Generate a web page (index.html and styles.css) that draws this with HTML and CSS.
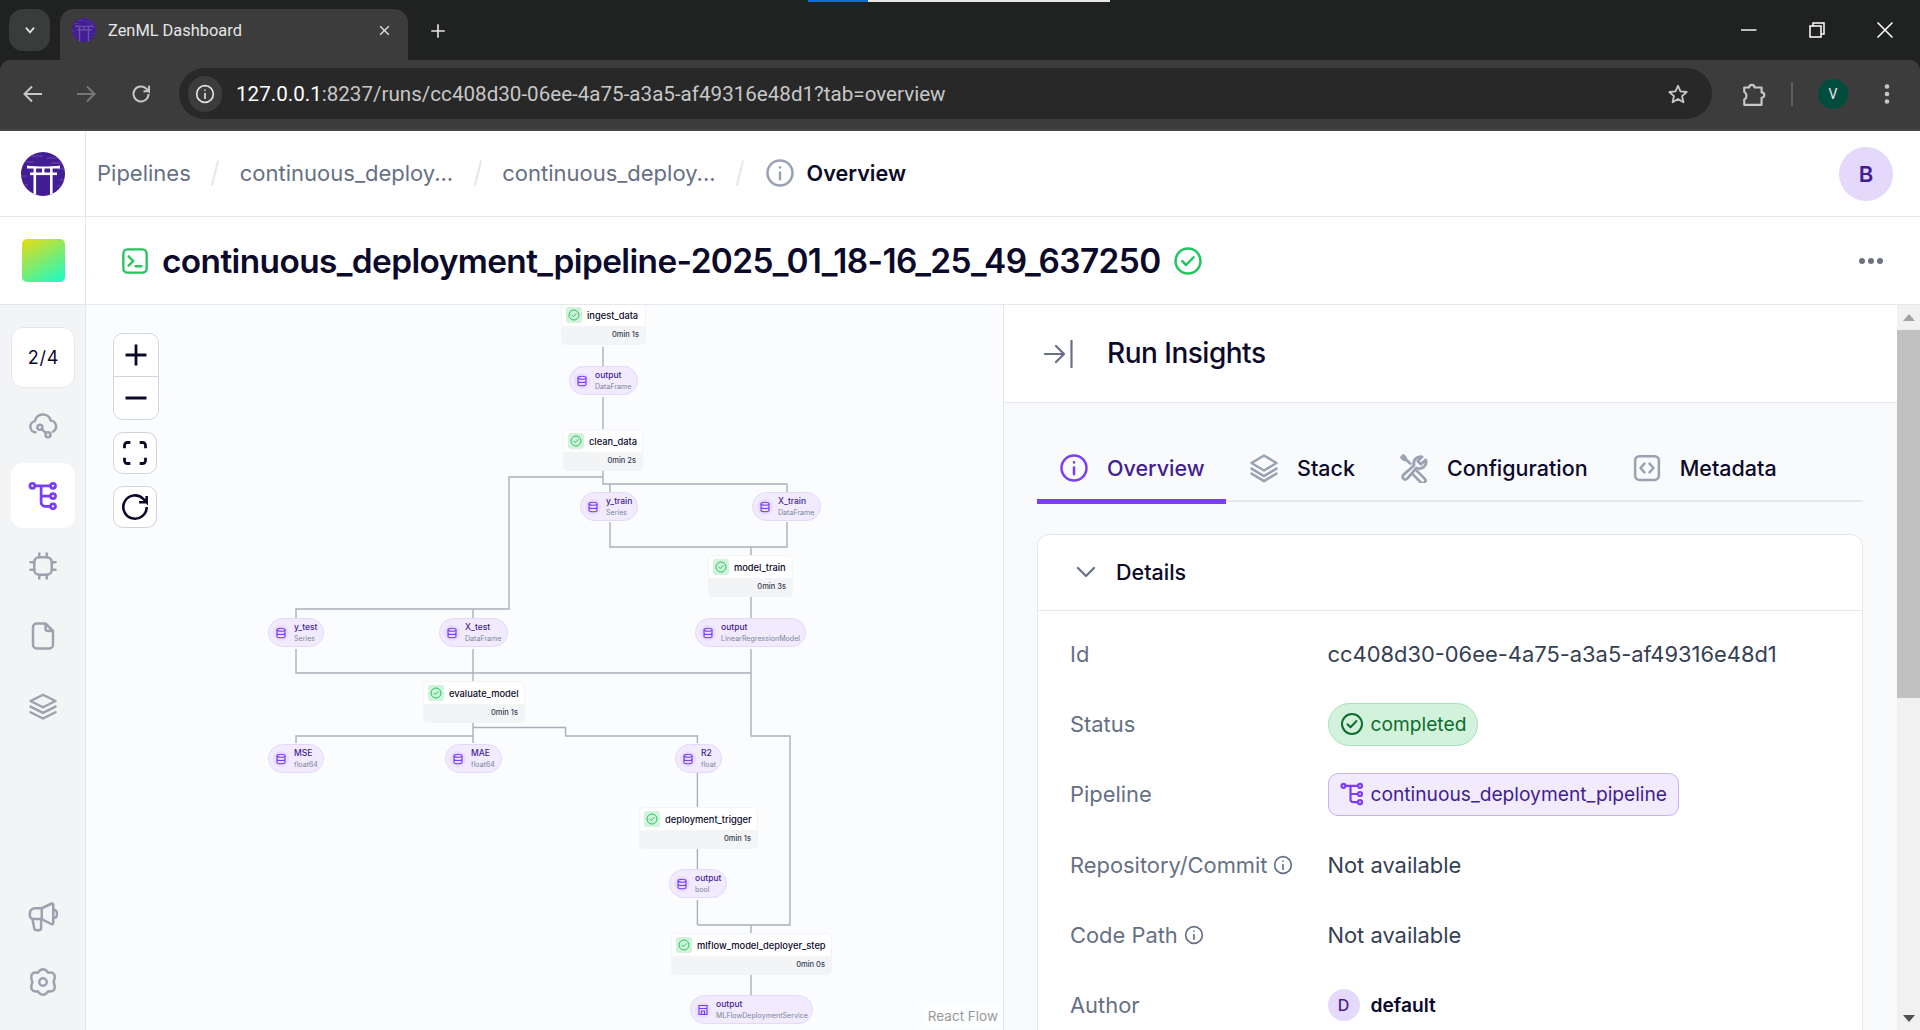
FILE: index.html
```html
<!DOCTYPE html>
<html lang="en">
<head>
<meta charset="utf-8">
<title>ZenML Dashboard</title>
<link rel="stylesheet" href="styles.css">
</head>
<body>
<svg class="defs" width="0" height="0" aria-hidden="true">
  <symbol id="i-check" viewBox="0 0 24 24"><circle cx="12" cy="12" r="10" fill="none" stroke="currentColor" stroke-width="2"/><path d="M7.500 12.200l3 3 6-6.200" fill="none" stroke="currentColor" stroke-width="2" stroke-linecap="round" stroke-linejoin="round"/></symbol>
  <symbol id="i-info" viewBox="0 0 24 24"><circle cx="12" cy="12" r="10" fill="none" stroke="currentColor" stroke-width="2"/><path d="M12 11.500v5.500M12 7.400v.1" fill="none" stroke="currentColor" stroke-width="2" stroke-linecap="round"/></symbol>
  <symbol id="i-db" viewBox="0 0 24 24"><g fill="none" stroke="currentColor" stroke-width="2.400"><ellipse cx="12" cy="5.500" rx="8" ry="3"/><path d="M4 5.500v13c0 1.700 3.600 3 8 3s8-1.300 8-3v-13M4 12c0 1.700 3.600 3 8 3s8-1.300 8-3"/></g></symbol>
  <symbol id="i-flow" viewBox="0 0 24 24"><g fill="none" stroke="currentColor" stroke-width="2.200" stroke-linecap="round"><circle cx="3.500" cy="3.800" r="2"/><circle cx="20" cy="3.800" r="2"/><circle cx="20" cy="12" r="2"/><circle cx="20" cy="20.200" r="2"/><path d="M5.500 3.800H18M10.500 3.800v13.400a3 3 0 0 0 3 3H18M10.500 12H18"/></g></symbol>
  <symbol id="i-logo" viewBox="0 0 44 44"><clipPath id="logoclip"><circle cx="22" cy="22" r="22"/></clipPath><g clip-path="url(#logoclip)"><rect width="44" height="44" fill="#431d93"/><path d="M8 4h14M26 6h12M4 10h9M30 11h12M36 17h8M0 24h5M39 28h5M36 34h8M0 33h7" stroke="#6a4bb0" stroke-width="1"/><path d="M6 13.500c7 1.300 26 1.300 33 0v3H6z" fill="currentColor"/><rect x="9" y="20.500" width="27" height="2.600" fill="currentColor"/><rect x="12.500" y="16" width="2.600" height="28" fill="currentColor"/><rect x="29" y="16" width="2.600" height="28" fill="currentColor"/><rect x="21" y="16" width="2.400" height="5" fill="currentColor"/></g></symbol>
</svg>

<header class="chrome">
  <div class="strip"><span class="loadbar"></span><span class="loadrest"></span></div>
  <div class="tabrow">
    <button class="tabmenu"><svg viewBox="0 0 24 24" class="ic-14"><path d="M5 8l7 8 7-8" fill="none" stroke="#e3e3e3" stroke-width="3"/></svg></button>
    <div class="tab">
      <svg class="favicon"><use href="#i-logo"/></svg>
      <span class="tabtitle">ZenML Dashboard</span>
      <svg viewBox="0 0 24 24" class="tabclose"><path d="M4 4l16 16M20 4L4 20" stroke="#e3e3e3" stroke-width="2.400"/></svg>
    </div>
    <svg viewBox="0 0 24 24" class="newtab"><path d="M12 3v18M3 12h18" stroke="#e3e3e3" stroke-width="2.200"/></svg>
    <div class="winctl">
      <svg viewBox="0 0 16 16" class="win"><path d="M0 8h15.500" stroke="#fff" stroke-width="1.400"/></svg>
      <svg viewBox="0 0 16 16" class="win"><path d="M4 3.500V1h11v11h-3M1 4h11v11H1z" fill="none" stroke="#fff" stroke-width="1.500"/></svg>
      <svg viewBox="0 0 16 16" class="win"><path d="M.5.5l15 15M15.500.5l-15 15" stroke="#fff" stroke-width="1.500"/></svg>
    </div>
  </div>
  <div class="toolbar">
    <svg viewBox="0 0 24 24" class="tool"><path d="M21 12H4M11 4.500L3.500 12l7.500 7.500" fill="none" stroke="#c7c7c7" stroke-width="2"/></svg>
    <svg viewBox="0 0 24 24" class="tool"><path d="M3 12h17M13 4.500l7.500 7.500-7.500 7.500" fill="none" stroke="#777" stroke-width="2"/></svg>
    <svg viewBox="0 0 24 24" class="tool reload"><path d="M19.500 12a7.500 7.500 0 1 1-2.300-5.400L20 9.300V3.800M20 9.300h-5.500" fill="none" stroke="#c7c7c7" stroke-width="2"/></svg>
    <div class="omnibox">
      <span class="sitechip"><svg viewBox="0 0 24 24" class="ic-20"><use href="#i-info" color="#e3e3e3"/></svg></span>
      <span class="url"><b>127.0.0.1</b>:8237/runs/cc408d30-06ee-4a75-a3a5-af49316e48d1?tab=overview</span>
      <svg viewBox="0 0 24 24" class="star"><path d="M12 3l2.700 6.200 6.800.6-5.100 4.500 1.500 6.700-5.900-3.500-5.900 3.500 1.500-6.700-5.100-4.500 6.800-.6z" fill="none" stroke="#c7c7c7" stroke-width="2" stroke-linejoin="round"/></svg>
    </div>
    <svg viewBox="0 0 24 24" class="ext"><path d="M3 6h4.500a2.500 2.500 0 0 1 5 0H19v4.500a2.500 2.500 0 0 1 0 5V22H3v-5a4 4 0 0 0 0-7z" fill="none" stroke="#c7c7c7" stroke-width="2" stroke-linejoin="round"/></svg>
    <span class="tooldiv"></span>
    <span class="profile">V</span>
    <svg viewBox="0 0 24 24" class="kebab"><circle cx="12" cy="4.500" r="2.300" fill="#c7c7c7"/><circle cx="12" cy="12" r="2.300" fill="#c7c7c7"/><circle cx="12" cy="19.500" r="2.300" fill="#c7c7c7"/></svg>
  </div>
</header>

<div class="app">
  <div class="topbar">
    <div class="leadcell"><svg class="logo"><use href="#i-logo"/></svg></div>
    <nav class="crumbs">
      <span>Pipelines</span><i class="slash"></i>
      <span>continuous_deploy...</span><i class="slash"></i>
      <span>continuous_deploy...</span><i class="slash"></i>
      <svg class="crumbicon"><use href="#i-info"/></svg>
      <strong>Overview</strong>
    </nav>
    <span class="useravatar">B</span>
  </div>

  <div class="titlebar">
    <div class="leadcell"><span class="gradbox"></span></div>
    <svg viewBox="0 0 24 24" class="termicon"><rect x="2" y="2" width="20" height="20" rx="3.500" fill="none" stroke="currentColor" stroke-width="2"/><path d="M6.500 8l4 4-4 4M12.500 16.500h5" fill="none" stroke="currentColor" stroke-width="2" stroke-linecap="round" stroke-linejoin="round"/></svg>
    <h1>continuous_deployment_pipeline-2025_01_18-16_25_49_637250</h1>
    <svg class="titlecheck"><use href="#i-check"/></svg>
    <svg viewBox="0 0 26 8" class="moredots"><circle cx="4" cy="4" r="3" fill="#6b7280"/><circle cx="13" cy="4" r="3" fill="#6b7280"/><circle cx="22" cy="4" r="3" fill="#6b7280"/></svg>
  </div>

  <div class="main">
    <aside class="sidebar">
      <div class="count">2/4</div>
      <a class="navitem"><svg viewBox="0 0 24 24"><g fill="none" stroke="currentColor" stroke-width="2" stroke-linecap="round"><path d="M6 17a4.500 4.500 0 0 1-.5-8.900 6.500 6.500 0 0 1 12.700-.4A4.700 4.700 0 0 1 20 16.500"/><circle cx="9.500" cy="13" r="2"/><circle cx="16" cy="19" r="2"/><path d="M11 14.500l3.200 3"/></g></svg></a>
      <a class="navitem active"><svg><use href="#i-flow"/></svg></a>
      <a class="navitem"><svg viewBox="0 0 24 24"><g fill="none" stroke="currentColor" stroke-width="2" stroke-linecap="round"><rect x="5" y="5" width="14" height="14" rx="4"/><path d="M9 2v3M15 2v3M9 19v3M15 19v3M2 9h3M2 15h3M19 9h3M19 15h3"/></g></svg></a>
      <a class="navitem"><svg viewBox="0 0 24 24"><path d="M14 2H7a3 3 0 0 0-3 3v14a3 3 0 0 0 3 3h10a3 3 0 0 0 3-3V8zM14 2v4a2 2 0 0 0 2 2h4" fill="none" stroke="currentColor" stroke-width="2" stroke-linejoin="round"/></svg></a>
      <a class="navitem"><svg viewBox="0 0 24 24"><g fill="none" stroke="currentColor" stroke-width="2" stroke-linejoin="round" stroke-linecap="round"><path d="M12 3l10 5-10 5L2 8z"/><path d="M2 12.500l10 5 10-5M2 17l10 5 10-5"/></g></svg></a>
      <div class="navbottom">
        <a class="navitem"><svg viewBox="0 0 24 24"><g fill="none" stroke="currentColor" stroke-width="2" stroke-linejoin="round" stroke-linecap="round"><path d="M11 5l8-3.800a1 1 0 0 1 1.200 1V16.800a1 1 0 0 1-1.200 1l-8.500-4.300H4A2.500 2.500 0 0 1 1.500 11V9a4 4 0 0 1 4-4z"/><path d="M20.200 6a3.500 3.500 0 0 1 3 3.500 3.500 3.500 0 0 1-3 3.500M3.500 13.500L5 21a2 2 0 0 0 2 1.600h1.500a2 2 0 0 0 2-2v-7M11 5v8.500"/></g></svg></a>
        <a class="navitem"><svg viewBox="0 0 24 24"><g fill="none" stroke="currentColor" stroke-width="2" stroke-linejoin="round"><circle cx="12" cy="12" r="3"/><path d="M7.800 4.600Q12-1 16.200 4.600 23.500 3.500 20.500 12 23.500 20.500 16.200 19.400 12 25 7.800 19.400 .5 20.500 3.500 12 .5 3.500 7.800 4.600z"/></g></svg></a>
      </div>
    </aside>

    <section class="graph">
      <svg class="edges" viewBox="86 305 917 725">
        <path d="M603 347V366M603 397V429M603 471V484H787V492M603 477H509V609H296V618M473 609V618M610 484V492M610 522V547H787V522M751 547V555M751 597V618M296 649V673H751M473 649V681M751 649V736H790V925H697.400M697.400 900V925M751 925V933M473 722V743M473 736H296V743M473 727.500H565.600V736H697.400V743M697.400 773V807M697.400 848V869M751 974V995"/>
      </svg>

      <div class="zoomgroup">
        <button class="ctl"><svg viewBox="0 0 24 24"><path d="M12 3v18M3 12h18" stroke="currentColor" stroke-width="2.400"/></svg></button>
        <button class="ctl"><svg viewBox="0 0 24 24"><path d="M3 12h18" stroke="currentColor" stroke-width="2.400"/></svg></button>
      </div>
      <button class="ctl single"><svg viewBox="0 0 24 24"><path d="M8 3H5.500A2.500 2.500 0 0 0 3 5.500V8M16 3h2.500A2.500 2.500 0 0 1 21 5.500V8M8 21H5.500A2.500 2.500 0 0 1 3 18.500V16M16 21h2.500a2.500 2.500 0 0 0 2.500-2.500V16" fill="none" stroke="currentColor" stroke-width="2.400"/></svg></button>
      <button class="ctl single"><svg viewBox="0 0 24 24"><path d="M22 12a10 10 0 1 1-2.900-7L22 8V2.500M22 8h-6.500" fill="none" stroke="currentColor" stroke-width="2.200"/></svg></button>

      <div class="step s-ingest"><div class="stephead"><span class="stepcheck"><svg><use href="#i-check"/></svg></span><span>ingest_data</span></div><div class="stepfoot">0min 1s</div></div>
      <div class="pill a-df"><span class="pillicon"><svg><use href="#i-db"/></svg></span><span class="pilltext"><b>output</b><small>DataFrame</small></span></div>
      <div class="step s-clean"><div class="stephead"><span class="stepcheck"><svg><use href="#i-check"/></svg></span><span>clean_data</span></div><div class="stepfoot">0min 2s</div></div>
      <div class="pill a-ytrain"><span class="pillicon"><svg><use href="#i-db"/></svg></span><span class="pilltext"><b>y_train</b><small>Series</small></span></div>
      <div class="pill a-xtrain"><span class="pillicon"><svg><use href="#i-db"/></svg></span><span class="pilltext"><b>X_train</b><small>DataFrame</small></span></div>
      <div class="step s-model"><div class="stephead"><span class="stepcheck"><svg><use href="#i-check"/></svg></span><span>model_train</span></div><div class="stepfoot">0min 3s</div></div>
      <div class="pill a-ytest"><span class="pillicon"><svg><use href="#i-db"/></svg></span><span class="pilltext"><b>y_test</b><small>Series</small></span></div>
      <div class="pill a-xtest"><span class="pillicon"><svg><use href="#i-db"/></svg></span><span class="pilltext"><b>X_test</b><small>DataFrame</small></span></div>
      <div class="pill a-lrm"><span class="pillicon"><svg><use href="#i-db"/></svg></span><span class="pilltext"><b>output</b><small>LinearRegressionModel</small></span></div>
      <div class="step s-eval"><div class="stephead"><span class="stepcheck"><svg><use href="#i-check"/></svg></span><span>evaluate_model</span></div><div class="stepfoot">0min 1s</div></div>
      <div class="pill a-mse"><span class="pillicon"><svg><use href="#i-db"/></svg></span><span class="pilltext"><b>MSE</b><small>float64</small></span></div>
      <div class="pill a-mae"><span class="pillicon"><svg><use href="#i-db"/></svg></span><span class="pilltext"><b>MAE</b><small>float64</small></span></div>
      <div class="pill a-r2"><span class="pillicon"><svg><use href="#i-db"/></svg></span><span class="pilltext"><b>R2</b><small>float</small></span></div>
      <div class="step s-trigger"><div class="stephead"><span class="stepcheck"><svg><use href="#i-check"/></svg></span><span>deployment_trigger</span></div><div class="stepfoot">0min 1s</div></div>
      <div class="pill a-bool"><span class="pillicon"><svg><use href="#i-db"/></svg></span><span class="pilltext"><b>output</b><small>bool</small></span></div>
      <div class="step s-mlflow"><div class="stephead"><span class="stepcheck"><svg><use href="#i-check"/></svg></span><span>mlflow_model_deployer_step</span></div><div class="stepfoot">0min 0s</div></div>
      <div class="pill a-ml"><span class="pillicon"><svg viewBox="0 0 24 24"><g fill="none" stroke="currentColor" stroke-width="2.400"><path d="M4 3h16v18H4zM4 9h16M9 21v-7h6v7"/></g></svg></span><span class="pilltext"><b>output</b><small>MLFlowDeploymentService</small></span></div>

      <div class="attribution">React Flow</div>
    </section>

    <section class="insights">
      <div class="insighthead">
        <svg viewBox="0 0 30 28" class="collapse"><path d="M1 14h19M12 6l8 8-8 8M27.500 1v26" fill="none" stroke="#667085" stroke-width="2.200" stroke-linecap="round" stroke-linejoin="round"/></svg>
        <h2>Run Insights</h2>
      </div>
      <div class="insightbody">
        <div class="tabs">
          <a class="tabitem current"><svg><use href="#i-info"/></svg>Overview</a>
          <a class="tabitem"><svg viewBox="0 0 24 24"><g fill="none" stroke="#98a2b3" stroke-width="2" stroke-linejoin="round" stroke-linecap="round"><path d="M12 2l10 6-10 6L2 8z"/><path d="M2 12.500l10 6 10-6M2 16.500l10 6 10-6"/></g></svg>Stack</a>
          <a class="tabitem"><svg viewBox="0 0 24 24"><g fill="none" stroke="#98a2b3" stroke-width="2.200" stroke-linejoin="round" stroke-linecap="round"><path d="M21.500 5.500a5.500 5.500 0 0 1-7.500 6.500L6.500 20.500a2.100 2.100 0 0 1-3-3L12 10a5.500 5.500 0 0 1 6.500-7L15 6.500 17.500 9z"/><path d="M9 8.500L5.500 5 5 3.500 3.500 2 2 3.500 3.500 5 5 5.500M14.500 14.500l6 6a2 2 0 0 1-3 3L11.500 17.500"/></g></svg>Configuration</a>
          <a class="tabitem"><svg viewBox="0 0 24 24"><g fill="none" stroke="#98a2b3" stroke-width="2" stroke-linejoin="round" stroke-linecap="round"><rect x="2.500" y="2.500" width="19" height="19" rx="3.500"/><path d="M10 8.500L6.800 12l3.200 3.500M14 8.500l3.200 3.500-3.200 3.500"/></g></svg>Metadata</a>
        </div>
        <div class="card">
          <div class="cardhead">
            <svg viewBox="0 0 20 12" class="chev"><path d="M2 2l8 8 8-8" fill="none" stroke="#667085" stroke-width="2.200" stroke-linecap="round" stroke-linejoin="round"/></svg>
            <h3>Details</h3>
          </div>
          <dl class="rows">
            <dt>Id</dt><dd>cc408d30-06ee-4a75-a3a5-af49316e48d1</dd>
            <dt>Status</dt><dd><span class="badge ok"><svg><use href="#i-check"/></svg>completed</span></dd>
            <dt>Pipeline</dt><dd><span class="badge pipe"><svg><use href="#i-flow"/></svg>continuous_deployment_pipeline</span></dd>
            <dt>Repository/Commit <svg class="hint"><use href="#i-info"/></svg></dt><dd>Not available</dd>
            <dt>Code Path <svg class="hint"><use href="#i-info"/></svg></dt><dd>Not available</dd>
            <dt>Author</dt><dd class="author"><span class="authoravatar">D</span><b>default</b></dd>
          </dl>
        </div>
      </div>
    </section>

    <div class="scrollbar">
      <span class="arrow up"></span>
      <span class="thumb"></span>
      <span class="arrow down"></span>
    </div>
  </div>
</div>
</body>
</html>
```

FILE: styles.css
```css
* { box-sizing: border-box; }
html, body { margin: 0; height: 100%; overflow: hidden; }
body { display: flex; flex-direction: column; font-family: Inter, "Liberation Sans", sans-serif; color: #0c0a2a; background: #fff; }
.defs { position: absolute; }
svg { display: block; flex: none; }
button { padding: 0; font: inherit; }

/* browser chrome */
.chrome { flex: none; height: 131px; background: #202222; display: flex; flex-direction: column; font-family: Roboto, "Liberation Sans", sans-serif; }
.strip { height: 2px; padding-left: 808px; display: flex; }
.loadbar { width: 60px; background: #0b6fd6; }
.loadrest { width: 242px; background: #e8e8e8; }
.tabrow { height: 58px; display: flex; align-items: flex-start; padding: 7px 0 0 9px; }
.tabmenu { width: 41px; height: 42px; border: 0; border-radius: 14px; background: #3a3b3b; display: flex; align-items: center; justify-content: center; }
.ic-14 { width: 14px; height: 14px; }
.tab { width: 348px; height: 51px; margin-left: 10px; background: #3c3c3c; border-radius: 14px 14px 0 0; display: flex; align-items: center; padding: 0 12px 9px 12px; color: #e6e6e6; }
.favicon { width: 24px; height: 24px; color: #6b52a6; }
.tabtitle { margin-left: 12px; font-size: 16.400px; flex: 1; }
.tabclose { width: 13px; height: 13px; margin-right: 5px; }
.newtab { width: 18px; height: 18px; margin: 13px 0 0 21px; }
.winctl { margin-left: auto; display: flex; gap: 52px; padding: 13px 27px 0 0; }
.win { width: 16px; height: 16px; }
.toolbar { height: 71px; background: #3c3c3c; border-radius: 10px 10px 0 0; display: flex; align-items: center; padding: 0 0 2px 21px; border-bottom: 2px solid #464646; }
.tool { width: 24px; height: 24px; margin-right: 29px; }
.tool.reload { margin: 0 27px 0 2px; }
.omnibox { width: 1533px; height: 51px; margin-left: -1px; background: #282828; border-radius: 26px; display: flex; align-items: center; padding: 1px 23px 0 9px; color: #c7c7c7; font-size: 20.600px; }
.sitechip { width: 34px; height: 36px; margin-top: -1px; border-radius: 18px; background: #3c3c3c; display: flex; align-items: center; justify-content: center; }
.ic-20 { width: 20px; height: 20px; }
.url { margin-left: 14px; flex: 1; white-space: nowrap; }
.url b { font-weight: 400; color: #fff; }
.star { width: 22px; height: 24px; margin-top: -1px; }
.ext { width: 26px; height: 26px; margin-left: 29px; }
.tooldiv { width: 2px; height: 24px; margin-left: 24px; background: #5f5f5f; }
.profile { width: 30px; height: 30px; margin-left: 25px; border-radius: 50%; background: #004d40; color: #e6e6e6; display: flex; align-items: center; justify-content: center; font-size: 14px; }
.kebab { width: 24px; height: 24px; margin-left: 27px; }

/* app */
.app { flex: 1; min-height: 0; display: flex; flex-direction: column; }
.topbar { flex: none; height: 86px; display: flex; align-items: center; border-bottom: 1px solid #e5e7eb; padding-right: 27px; }
.leadcell { width: 86px; align-self: stretch; flex: none; display: flex; align-items: center; justify-content: center; border-right: 1px solid #e5e7eb; }
.logo { width: 44px; height: 44px; color: #fff; }
.crumbs { display: flex; align-items: center; margin-left: 11px; padding-bottom: 1px; font-size: 22px; color: #667085; flex: 1; white-space: nowrap; }
.slash { width: 2px; height: 26px; margin: 0 23.500px; background: #e5e7eb; transform: rotate(14deg); }
.crumbicon { width: 30px; height: 30px; color: #98a2b3; margin-right: 12px; }
.crumbs strong { color: #0c0a2a; font-size: 21.600px; font-weight: 600; }
.useravatar { width: 54px; height: 54px; border-radius: 50%; background: #e4d8fb; color: #431d93; font-size: 22px; font-weight: 600; display: flex; align-items: center; justify-content: center; }

.titlebar { flex: none; height: 88px; display: flex; align-items: center; border-bottom: 1px solid #e5e7eb; }
.gradbox { width: 43px; height: 43px; margin-left: 1px; border-radius: 5px; background: linear-gradient(150deg, #e9dc10, #14fbcb); }
.termicon { width: 28px; height: 28px; margin-left: 35px; color: #22c55e; }
.titlebar h1 { margin: 0 0 0 13px; font-size: 33.400px; font-weight: 600; letter-spacing: -.6px; white-space: nowrap; }
.titlecheck { width: 30px; height: 30px; margin-left: 12px; color: #22c55e; }
.moredots { width: 26px; height: 8px; margin-left: auto; margin-right: 36px; }

.main { flex: 1; min-height: 0; display: flex; }
.sidebar { width: 86px; flex: none; background: #f3f4f6; border-right: 1px solid #e5e7eb; display: flex; flex-direction: column; align-items: center; padding: 22px 0 16px; }
.count { width: 64px; height: 61px; padding-left: 2px; border: 1px solid #e5e7eb; border-radius: 12px; background: #fff; color: #0c0a2a; font-size: 18px; display: flex; align-items: center; justify-content: center; letter-spacing: .8px; }
.navitem { width: 64px; height: 65px; margin-top: 5px; border-radius: 12px; display: flex; align-items: center; justify-content: center; color: #9ca3af; }
.navitem svg { width: 30px; height: 30px; }
.navitem.active { background: #fff; color: #7a3ef8; }
.navbottom { margin-top: auto; display: flex; flex-direction: column; }
.navbottom .navitem { margin-top: 0; }

.graph { position: relative; width: 918px; flex: none; background: #fbfcfe; border-right: 1px solid #e5e7eb; overflow: hidden; padding: 28px 0 0 27px; display: flex; flex-direction: column; align-items: flex-start; gap: 12px; }
.edges { position: absolute; left: 0; top: 0; width: 917px; height: 725px; fill: none; stroke: #aab0ba; stroke-width: 1.400; }
.ctl { position: relative; width: 46px; height: 43px; border: 0; background: #fff; color: #0c0a2a; display: flex; align-items: center; justify-content: center; }
.ctl svg { width: 28px; height: 28px; }
.zoomgroup { position: relative; width: 46px; height: 87px; border: 1px solid #d0d5dd; border-radius: 10px; overflow: hidden; }
.zoomgroup .ctl { width: 44px; height: 42px; }
.zoomgroup .ctl + .ctl { height: 43px; border-top: 1px solid #d0d5dd; }
.ctl.single { width: 44px; height: 42px; border: 1px solid #d0d5dd; border-radius: 10px; }

.step, .pill { position: absolute; white-space: nowrap; }
.step { height: 42px; border-radius: 5px; background: #fff; border: 1px solid #f2f4f7; overflow: hidden; display: flex; flex-direction: column; font-size: 9.300px; font-weight: 500; }
.stephead { height: 25px; display: flex; align-items: center; gap: 5px; padding-left: 4px; color: #0c0a2a; }
.stepcheck { width: 16px; height: 16px; border-radius: 3px; background: #d3f2dc; color: #22c55e; display: flex; align-items: center; justify-content: center; }
.stepcheck svg { width: 12px; height: 12px; }
.stepfoot { flex: 1; background: #f3f4f6; text-align: right; padding-right: 6px; font-size: 7.500px; line-height: 18px; color: #344054; }
.pill { height: 29px; border-radius: 15px; border: 1px solid #e4d8fb; background: #f1ebfd; display: flex; align-items: center; gap: 5px; padding-left: 4px; }
.pillicon { width: 16px; height: 16px; border-radius: 50%; background: #e8dffc; color: #7a3ef8; display: flex; align-items: center; justify-content: center; }
.pillicon svg { width: 12px; height: 12px; }
.pilltext { display: flex; flex-direction: column; gap: 1px; }
.pilltext b { font-size: 8.500px; font-weight: 500; line-height: 11px; color: #431d93; }
.pilltext small { font-size: 7.100px; line-height: 10px; color: #7d8699; }

.s-ingest { left: 475px; top: -2px; width: 85px; }
.s-clean { left: 477px; top: 124px; width: 80px; }
.s-model { left: 622px; top: 250px; width: 85px; }
.s-eval { left: 337px; top: 376px; width: 102px; }
.s-trigger { left: 553px; top: 502px; width: 119px; }
.s-mlflow { left: 585px; top: 628px; width: 161px; }
.a-df { left: 483px; top: 61px; width: 69px; }
.a-ytrain { left: 494px; top: 187px; width: 58px; }
.a-xtrain { left: 666px; top: 187px; width: 69px; }
.a-ytest { left: 182px; top: 313px; width: 56px; }
.a-xtest { left: 353px; top: 313px; width: 69px; }
.a-lrm { left: 609px; top: 313px; width: 111px; }
.a-mse { left: 182px; top: 439px; width: 56px; }
.a-mae { left: 359px; top: 439px; width: 57px; }
.a-r2 { left: 589px; top: 439px; width: 47px; }
.a-bool { left: 583px; top: 564px; width: 58px; }
.a-ml { left: 604px; top: 690px; width: 123px; }
.attribution { position: absolute; right: 2px; bottom: 3px; padding: 3px 3px 3px 5px; background: rgba(255,255,255,.5); font-size: 13.500px; color: #999; }

.insights { flex: 1; min-width: 0; display: flex; flex-direction: column; }
.insighthead { flex: none; height: 98px; background: #fff; border-bottom: 1px solid #e5e7eb; display: flex; align-items: center; padding-left: 40px; }
.collapse { width: 30px; height: 28px; }
.insighthead h2 { margin: 0 0 2px 33px; font-size: 28px; font-weight: 500; letter-spacing: -.5px; }
.insightbody { flex: 1; min-height: 0; background: #f9fafb; padding: 34px 34px 0 33px; }
.tabs { height: 65px; display: flex; gap: 44px; border-bottom: 2px solid #e5e7eb; }
.tabitem { height: 65px; display: flex; align-items: center; gap: 18px; padding-bottom: 4px; font-size: 21.500px; font-weight: 500; color: #0c0a2a; }
.tabitem svg { width: 30px; height: 30px; }
.tabitem.current { width: 189px; height: 67px; margin-right: -21px; padding: 0 0 0 22px; border-bottom: 5px solid #7a3ef8; color: #431d93; }
.tabitem.current svg { color: #7a3ef8; }
.card { margin-top: 32px; height: 600px; background: #fff; border: 1px solid #e5e7eb; border-radius: 12px; }
.cardhead { height: 76px; display: flex; align-items: center; padding: 0 0 2px 38px; border-bottom: 1px solid #e5e7eb; }
.chev { width: 20px; height: 12px; }
.cardhead h3 { margin: 0 0 0 20px; font-size: 21.500px; font-weight: 500; }
.rows { margin: 8px 0 0; display: grid; grid-template-columns: 257.500px 1fr; grid-auto-rows: 70.200px; padding-left: 32px; font-size: 21.900px; }
.rows dt { display: flex; align-items: center; gap: 6px; color: #667085; white-space: nowrap; }
.rows dd { margin: 0; display: flex; align-items: center; color: #344054; white-space: nowrap; }
.hint { width: 20px; height: 20px; color: #667085; }
.badge { height: 43px; display: flex; align-items: center; gap: 7px; padding: 0 11px; border: 1px solid; font-size: 19.200px; }
.badge svg { width: 24px; height: 24px; }
.badge.ok { background: #d3f2dc; border-color: #a5e3b9; border-radius: 22px; color: #0f6b2e; }
.badge.pipe { background: #f1ebfd; border-color: #c6b0f7; border-radius: 10px; color: #431d93; }
.badge.pipe svg { color: #7a3ef8; }
.author { gap: 11px; }
.author b { font-size: 19.200px; font-weight: 600; color: #0c0a2a; }
.authoravatar { width: 32px; height: 32px; border-radius: 50%; background: #e4d8fb; color: #431d93; font-size: 16px; font-weight: 500; display: flex; align-items: center; justify-content: center; }

.scrollbar { width: 23px; flex: none; background: #f1f1f1; display: flex; flex-direction: column; align-items: center; }
.thumb { width: 100%; height: 368px; background: #c1c1c1; }
.arrow { width: 0; height: 0; border-left: 6px solid transparent; border-right: 6px solid transparent; }
.arrow.up { margin: 9px 0 9px; border-bottom: 7px solid #a3a3a3; }
.arrow.down { margin-top: auto; margin-bottom: 8px; border-top: 7px solid #505050; }
```
